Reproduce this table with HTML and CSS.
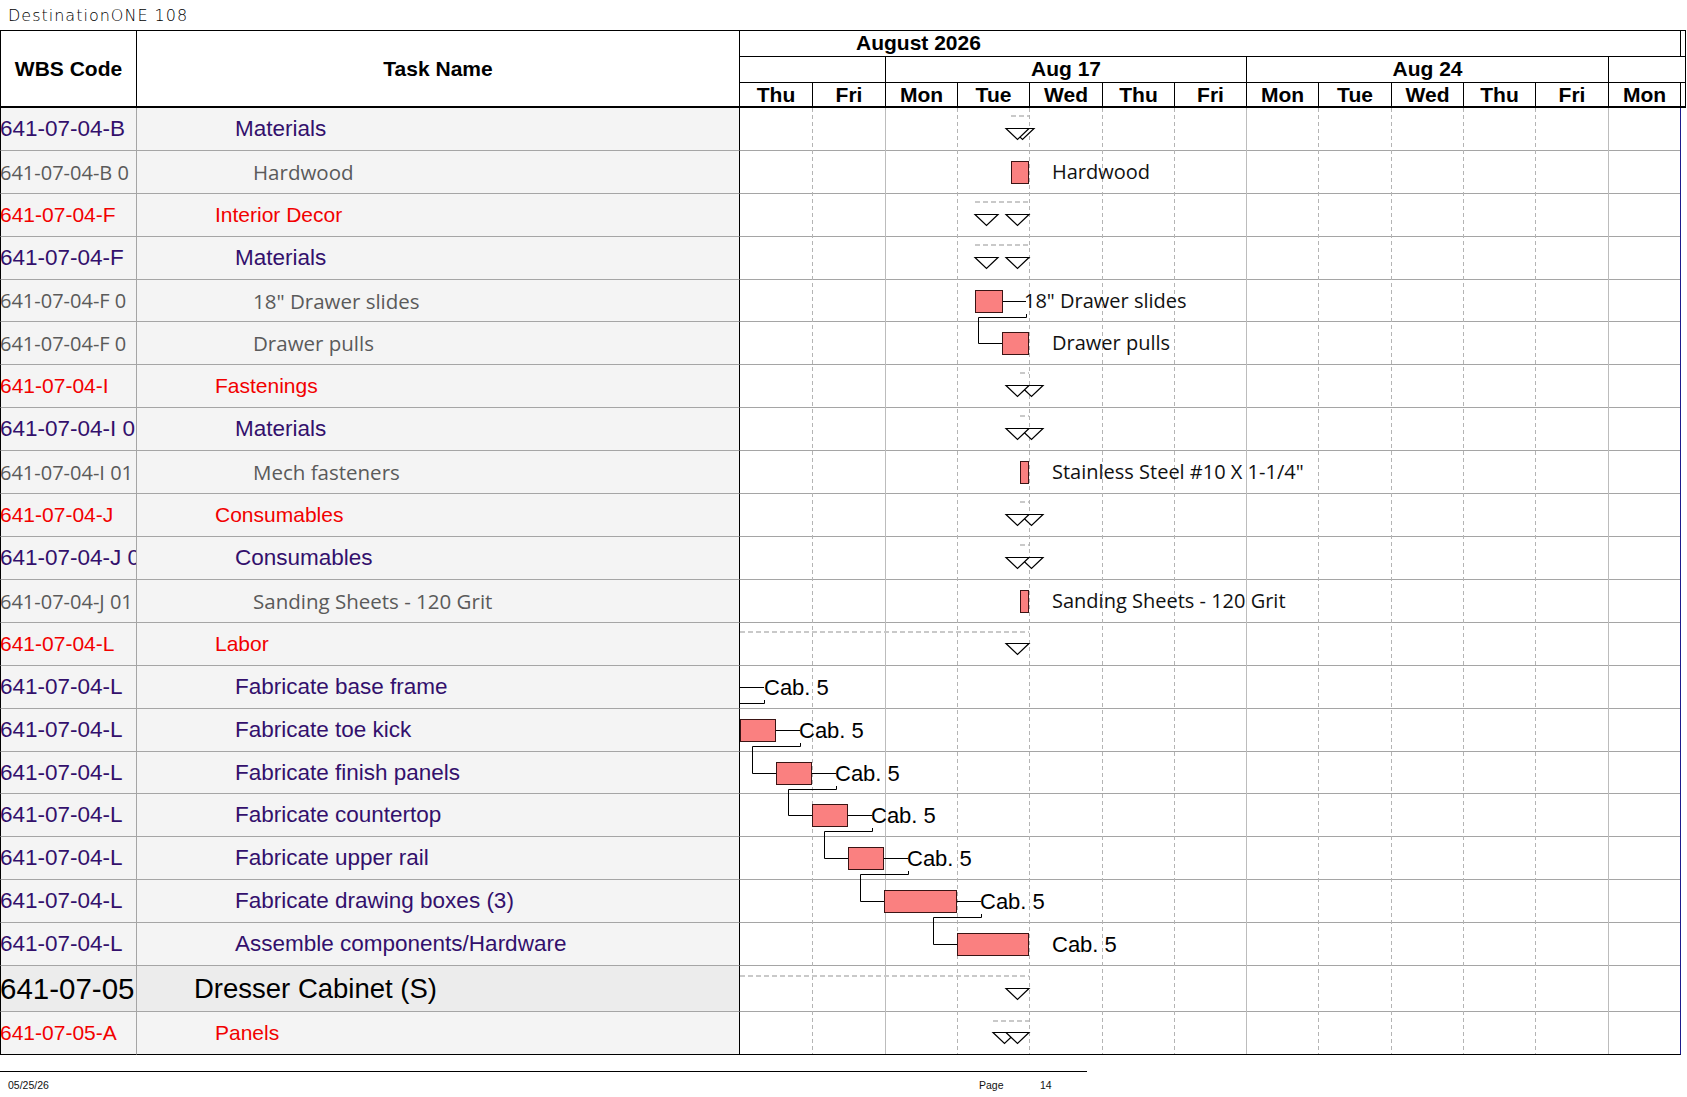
FILE: index.html
```html
<!DOCTYPE html>
<html lang="en">
<head>
<meta charset="utf-8">
<title>DestinationONE 108</title>
<link rel="stylesheet" href="styles.css">
</head>
<body>
<div class="sheet">
  <div class="title">DestinationONE 108</div>

  <div class="head">
    <div class="h-wbs">WBS Code</div>
    <div class="h-task">Task Name</div>
    <div class="h-gantt">
      <div class="h-month">
        <div class="m-label">August 2026</div>
        <div class="m-fill"></div>
      </div>
      <div class="h-weeks">
        <div class="wk"></div>
        <div class="wk">Aug 17</div>
        <div class="wk">Aug 24</div>
        <div class="wk"></div>
      </div>
      <div class="h-days">
        <div class="d">Thu</div><div class="d">Fri</div><div class="d">Mon</div><div class="d">Tue</div><div class="d">Wed</div><div class="d">Thu</div><div class="d">Fri</div><div class="d">Mon</div><div class="d">Tue</div><div class="d">Wed</div><div class="d">Thu</div><div class="d">Fri</div><div class="d">Mon</div><div class="d fill"></div>
      </div>
    </div>
  </div>

  <div class="body">
    <div class="row purple"><div class="wbs">641-07-04-B</div><div class="task">Materials</div></div>
    <div class="row gray"><div class="wbs">641-07-04-B 0</div><div class="task">Hardwood</div></div>
    <div class="row red"><div class="wbs">641-07-04-F</div><div class="task">Interior Decor</div></div>
    <div class="row purple"><div class="wbs">641-07-04-F</div><div class="task">Materials</div></div>
    <div class="row gray"><div class="wbs">641-07-04-F 0</div><div class="task">18" Drawer slides</div></div>
    <div class="row gray"><div class="wbs">641-07-04-F 0</div><div class="task">Drawer pulls</div></div>
    <div class="row red"><div class="wbs">641-07-04-I</div><div class="task">Fastenings</div></div>
    <div class="row purple"><div class="wbs">641-07-04-I 0</div><div class="task">Materials</div></div>
    <div class="row gray"><div class="wbs">641-07-04-I 01</div><div class="task">Mech fasteners</div></div>
    <div class="row red"><div class="wbs">641-07-04-J</div><div class="task">Consumables</div></div>
    <div class="row purple"><div class="wbs">641-07-04-J 0</div><div class="task">Consumables</div></div>
    <div class="row gray"><div class="wbs">641-07-04-J 01</div><div class="task">Sanding Sheets - 120 Grit</div></div>
    <div class="row red"><div class="wbs">641-07-04-L</div><div class="task">Labor</div></div>
    <div class="row purple"><div class="wbs">641-07-04-L</div><div class="task">Fabricate base frame</div></div>
    <div class="row purple"><div class="wbs">641-07-04-L</div><div class="task">Fabricate toe kick</div></div>
    <div class="row purple"><div class="wbs">641-07-04-L</div><div class="task">Fabricate finish panels</div></div>
    <div class="row purple"><div class="wbs">641-07-04-L</div><div class="task">Fabricate countertop</div></div>
    <div class="row purple"><div class="wbs">641-07-04-L</div><div class="task">Fabricate upper rail</div></div>
    <div class="row purple"><div class="wbs">641-07-04-L</div><div class="task">Fabricate drawing boxes (3)</div></div>
    <div class="row purple"><div class="wbs">641-07-04-L</div><div class="task">Assemble components/Hardware</div></div>
    <div class="row top"><div class="wbs">641-07-05</div><div class="task">Dresser Cabinet (S)</div></div>
    <div class="row red last"><div class="wbs">641-07-05-A</div><div class="task">Panels</div></div>

    <div class="gantt">
      <svg class="chart" width="940" height="946" viewBox="0 0 940 946" xmlns="http://www.w3.org/2000/svg">
        <g class="rowlines">
          <line x1="0" y1="42.5" x2="940" y2="42.5"/>
          <line x1="0" y1="85.5" x2="940" y2="85.5"/>
          <line x1="0" y1="128.5" x2="940" y2="128.5"/>
          <line x1="0" y1="171.5" x2="940" y2="171.5"/>
          <line x1="0" y1="213.5" x2="940" y2="213.5"/>
          <line x1="0" y1="256.5" x2="940" y2="256.5"/>
          <line x1="0" y1="299.5" x2="940" y2="299.5"/>
          <line x1="0" y1="342.5" x2="940" y2="342.5"/>
          <line x1="0" y1="385.5" x2="940" y2="385.5"/>
          <line x1="0" y1="428.5" x2="940" y2="428.5"/>
          <line x1="0" y1="471.5" x2="940" y2="471.5"/>
          <line x1="0" y1="514.5" x2="940" y2="514.5"/>
          <line x1="0" y1="557.5" x2="940" y2="557.5"/>
          <line x1="0" y1="600.5" x2="940" y2="600.5"/>
          <line x1="0" y1="643.5" x2="940" y2="643.5"/>
          <line x1="0" y1="685.5" x2="940" y2="685.5"/>
          <line x1="0" y1="728.5" x2="940" y2="728.5"/>
          <line x1="0" y1="771.5" x2="940" y2="771.5"/>
          <line x1="0" y1="814.5" x2="940" y2="814.5"/>
          <line x1="0" y1="857.5" x2="940" y2="857.5"/>
          <line x1="0" y1="903.5" x2="940" y2="903.5"/>
        </g>
        <g class="daylines">
          <line x1="72.5" y1="0" x2="72.5" y2="946"/>
          <line x1="217.5" y1="0" x2="217.5" y2="946"/>
          <line x1="289.5" y1="0" x2="289.5" y2="946"/>
          <line x1="362.5" y1="0" x2="362.5" y2="946"/>
          <line x1="434.5" y1="0" x2="434.5" y2="946"/>
          <line x1="578.5" y1="0" x2="578.5" y2="946"/>
          <line x1="651.5" y1="0" x2="651.5" y2="946"/>
          <line x1="723.5" y1="0" x2="723.5" y2="946"/>
          <line x1="795.5" y1="0" x2="795.5" y2="946"/>
        </g>
        <g class="weeklines">
          <line x1="145.5" y1="0" x2="145.5" y2="946"/>
          <line x1="506.5" y1="0" x2="506.5" y2="946"/>
          <line x1="868.5" y1="0" x2="868.5" y2="946"/>
        </g>
        <g class="sumline">
          <line x1="271" y1="8" x2="289" y2="8"/>
          <line x1="235" y1="94" x2="289" y2="94"/>
          <line x1="235" y1="137" x2="289" y2="137"/>
          <line x1="280" y1="265" x2="289" y2="265"/>
          <line x1="280" y1="308" x2="289" y2="308"/>
          <line x1="280" y1="394" x2="289" y2="394"/>
          <line x1="280" y1="437" x2="289" y2="437"/>
          <line x1="0" y1="524" x2="289" y2="524"/>
          <line x1="0" y1="868" x2="289" y2="868"/>
          <line x1="253" y1="913" x2="289" y2="913"/>
        </g>
        <g class="tri">
          <polygon points="271,20.5 294,20.5 282.5,31.5"/>
          <polygon points="266,20.5 289,20.5 277.5,31.5"/>
          <polygon points="235,106.5 258,106.5 246.5,117.5"/>
          <polygon points="266,106.5 289,106.5 277.5,117.5"/>
          <polygon points="235,149.5 258,149.5 246.5,160.5"/>
          <polygon points="266,149.5 289,149.5 277.5,160.5"/>
          <polygon points="280,277.5 303,277.5 291.5,288.5"/>
          <polygon points="266,277.5 289,277.5 277.5,288.5"/>
          <polygon points="280,320.5 303,320.5 291.5,331.5"/>
          <polygon points="266,320.5 289,320.5 277.5,331.5"/>
          <polygon points="280,406.5 303,406.5 291.5,417.5"/>
          <polygon points="266,406.5 289,406.5 277.5,417.5"/>
          <polygon points="280,449.5 303,449.5 291.5,460.5"/>
          <polygon points="266,449.5 289,449.5 277.5,460.5"/>
          <polygon points="266,535.5 289,535.5 277.5,546.5"/>
          <polygon points="266,880.5 289,880.5 277.5,891.5"/>
          <polygon points="253,924.5 276,924.5 264.5,935.5"/>
          <polygon points="266,924.5 289,924.5 277.5,935.5"/>
        </g>
        <g class="links">
          <line x1="262" y1="193.5" x2="286" y2="193.5"/>
          <path d="M286.5 206 V209.5 H238.5 V235.5 H262"/>
          <line x1="0" y1="579.5" x2="24" y2="579.5"/>
          <path d="M24.5 592 V595.5 H0"/>
          <line x1="36" y1="622.5" x2="60" y2="622.5"/>
          <path d="M60.5 635 V638.5 H12.5 V665.5 H36"/>
          <line x1="72" y1="665.5" x2="96" y2="665.5"/>
          <path d="M96.5 678 V681.5 H48.5 V707.5 H72"/>
          <line x1="108" y1="707.5" x2="132" y2="707.5"/>
          <path d="M132.5 720 V723.5 H84.5 V750.5 H108"/>
          <line x1="144" y1="750.5" x2="168" y2="750.5"/>
          <path d="M168.5 763 V766.5 H120.5 V793.5 H144"/>
          <line x1="217" y1="793.5" x2="241" y2="793.5"/>
          <path d="M241.5 806 V809.5 H193.5 V836.5 H217"/>
        </g>
        <g class="bars">
          <rect x="271.5" y="53.5" width="17" height="22"/>
          <rect x="235.5" y="182.5" width="27" height="22"/>
          <rect x="262.5" y="224.5" width="26" height="22"/>
          <rect x="280.5" y="353.5" width="8" height="22"/>
          <rect x="280.5" y="482.5" width="8" height="22"/>
          <rect x="0.5" y="611.5" width="35" height="22"/>
          <rect x="36.5" y="654.5" width="35" height="22"/>
          <rect x="72.5" y="696.5" width="35" height="22"/>
          <rect x="108.5" y="739.5" width="35" height="22"/>
          <rect x="144.5" y="782.5" width="72" height="22"/>
          <rect x="217.5" y="825.5" width="71" height="22"/>
        </g>
        <g class="lbl-c">
          <text x="312" y="71">Hardwood</text>
          <text x="284" y="200">18" Drawer slides</text>
          <text x="312" y="242">Drawer pulls</text>
          <text x="312" y="371">Stainless Steel #10 X 1-1/4"</text>
          <text x="312" y="500">Sanding Sheets - 120 Grit</text>
        </g>
        <g class="lbl-a">
          <text x="24" y="587">Cab. 5</text>
          <text x="59" y="630">Cab. 5</text>
          <text x="95" y="673">Cab. 5</text>
          <text x="131" y="715">Cab. 5</text>
          <text x="167" y="758">Cab. 5</text>
          <text x="240" y="801">Cab. 5</text>
          <text x="312" y="844">Cab. 5</text>
        </g>
      </svg>
    </div>
  </div>

  <div class="foot">
    <div class="f-date">05/25/26</div>
    <div class="f-page">Page</div>
    <div class="f-num">14</div>
  </div>
</div>
</body>
</html>
```

FILE: styles.css
```css
* {
  box-sizing: border-box;
}

html, body {
  margin: 0;
  padding: 0;
  background: #ffffff;
}

.sheet {
  width: 1687px;
  font-family: "Liberation Sans", Arial, sans-serif;
  color: #000;
}

.title {
  height: 30px;
  line-height: 30px;
  padding: 1px 0 0 8px;
  font-family: "DejaVu Sans", sans-serif;
  font-weight: 200;
  font-size: 16px;
  letter-spacing: 1px;
  color: #000;
  white-space: nowrap;
}

/* ---------- header ---------- */
.head {
  display: grid;
  grid-template-columns: 137px 603px 946px;
  height: 78px;
}

.h-wbs,
.h-task {
  display: flex;
  align-items: center;
  justify-content: center;
  font-weight: bold;
  font-size: 21px;
  border-top: 1px solid #000;
  border-right: 1px solid #000;
  border-bottom: 2px solid #000;
}

.h-wbs {
  border-left: 1px solid #000;
}

.h-gantt {
  display: grid;
  grid-template-rows: 26px 26px 23px;
  border-top: 1px solid #000;
  border-right: 1px solid #000;
  border-bottom: 2px solid #000;
  font-weight: bold;
  font-size: 21px;
}

.h-month {
  display: grid;
  grid-template-columns: 940px 5px;
  border-bottom: 1px solid #000;
}

.m-label {
  display: flex;
  align-items: center;
  padding: 0 0 1px 116px;
}

.m-fill {
  border-left: 1px solid #000;
}

.h-weeks {
  display: grid;
  grid-template-columns: 145px 361px 362px 77px;
  border-bottom: 1px solid #000;
}

.wk {
  display: flex;
  align-items: center;
  justify-content: center;
  padding-bottom: 3px;
}

.wk + .wk {
  border-left: 1px solid #000;
}

.h-days {
  display: grid;
  grid-template-columns: 72px 73px 72px 72px 73px 72px 72px 72px 73px 72px 72px 73px 72px 5px;
}

.d {
  display: flex;
  align-items: center;
  justify-content: center;
  padding-bottom: 1px;
}

.d + .d {
  border-left: 1px solid #000;
}

/* ---------- body rows ---------- */
.body {
  display: grid;
  grid-template-columns: 137px 603px 941px;
  grid-template-rows: 43px 43px 43px 43px 42px 43px 43px 43px 43px 43px 43px 43px 43px 43px 43px 42px 43px 43px 43px 43px 46px 43px;
}

.row {
  display: contents;
}

.wbs,
.task {
  display: flex;
  align-items: center;
  overflow: hidden;
  white-space: nowrap;
  background: #f4f4f4;
  border-bottom: 1px solid #a5a5a5;
}

.wbs {
  grid-column: 1;
  padding-left: 0;
  border-left: 1px solid #000;
  border-right: 1px solid #a5a5a5;
  text-indent: -1px;
}

.task {
  grid-column: 2;
  border-right: 1px solid #000;
}

.red .wbs,
.red .task {
  color: #f20000;
  font-size: 21px;
}

.red .task {
  padding-left: 78px;
}

.purple .wbs,
.purple .task {
  color: #33106c;
  font-size: 22.5px;
}

.purple .task {
  padding-left: 98px;
}

.gray .wbs,
.gray .task {
  color: #5a5a5a;
  font-family: "Open Sans", sans-serif;
  font-size: 20.5px;
}

.gray .wbs {
  font-size: 20px;
}

.gray .task {
  padding-left: 116px;
}

.top .wbs,
.top .task {
  background: #ececec;
  color: #000;
}

.top .wbs {
  font-size: 29.5px;
}

.top .task {
  font-size: 27.5px;
  padding-left: 57px;
}

.last .wbs,
.last .task {
  border-bottom-color: #000;
}

/* ---------- gantt ---------- */
.gantt {
  grid-column: 3;
  grid-row: 1 / span 22;
  border-right: 1px solid #1b1b8c;
  border-bottom: 1px solid #000;
  background: #ffffff;
}

.chart {
  display: block;
}

.rowlines line {
  stroke: #a5a5a5;
  stroke-width: 1;
}

.daylines line {
  stroke: #b4b4b4;
  stroke-width: 1;
  stroke-dasharray: 4 3;
}

.weeklines line {
  stroke: #bcbcbc;
  stroke-width: 1;
}

.sumline line {
  stroke: #c9c9c9;
  stroke-width: 2;
  stroke-dasharray: 5 3;
}

.tri polygon {
  fill: #ffffff;
  stroke: #000;
  stroke-width: 1.2;
  stroke-linejoin: miter;
}

.links line,
.links path {
  fill: none;
  stroke: #000;
  stroke-width: 1;
}

.bars rect {
  fill: #fa8080;
  stroke: #3a1414;
  stroke-width: 1;
}

.lbl-c text {
  font-family: "Open Sans", sans-serif;
  font-size: 20px;
  fill: #111;
}

.lbl-a text {
  font-family: "Liberation Sans", Arial, sans-serif;
  font-size: 22px;
  fill: #000;
}

/* ---------- footer ---------- */
.foot {
  margin-top: 16px;
  width: 1087px;
  height: 26px;
  border-top: 1px solid #000;
  display: grid;
  grid-template-columns: 979px 61px 1fr;
  align-items: center;
  font-size: 10.5px;
  color: #111;
}

.f-date {
  padding-left: 8px;
}
```
